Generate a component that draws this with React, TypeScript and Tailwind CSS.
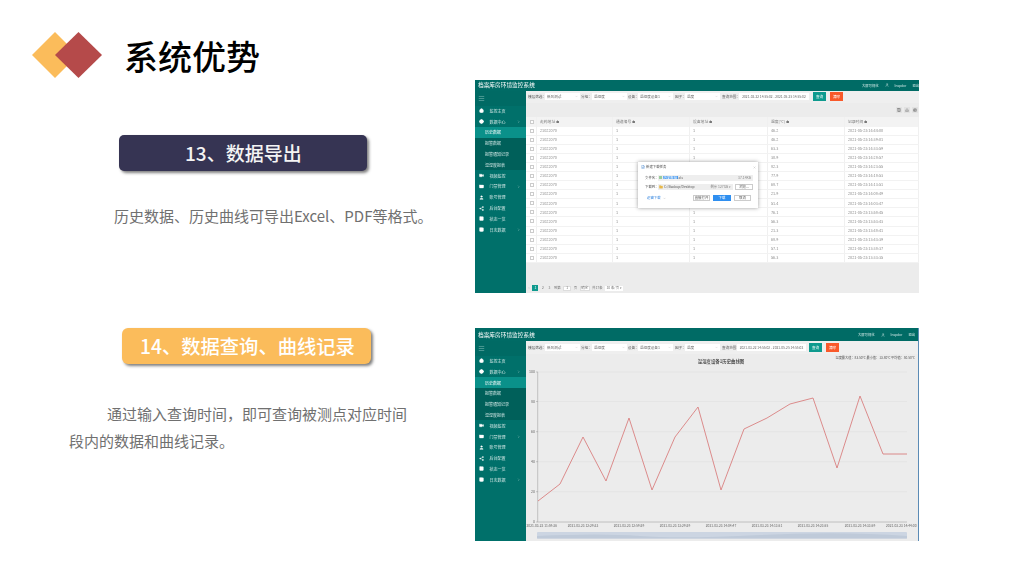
import React from "react";
import { Home, Globe, Video, Columns3, User, Share2, Table, CreditCard, ChevronRight, ChevronDown, Menu, Printer, Download, FileDown, X, Folder } from "lucide-react";

const menu: { label: string; Icon?: any; arrow?: boolean; sub?: boolean; active?: boolean }[] = [
  { label: "监控主页", Icon: Home },
  { label: "数据中心", Icon: Globe, arrow: true },
  { label: "历史数据", sub: true, active: true },
  { label: "报警数据", sub: true },
  { label: "报警通知记录", sub: true },
  { label: "温湿度报表", sub: true },
  { label: "视频监控", Icon: Video },
  { label: "门禁管理", Icon: CreditCard, arrow: true },
  { label: "账号管理", Icon: User },
  { label: "后台配置", Icon: Share2 },
  { label: "状态一览", Icon: Columns3 },
  { label: "日志数据", Icon: Table, arrow: true },
];

const rows: [string, string][] = [
  ["46.2", "2021-05-25 14:44:00"],
  ["46.2", "2021-05-25 14:39:01"],
  ["63.3", "2021-05-25 14:33:59"],
  ["30.9", "2021-05-25 14:28:57"],
  ["82.3", "2021-05-25 14:23:55"],
  ["77.9", "2021-05-25 14:18:53"],
  ["68.7", "2021-05-25 14:13:51"],
  ["21.9", "2021-05-25 14:08:49"],
  ["51.4", "2021-05-25 14:03:47"],
  ["76.1", "2021-05-25 13:58:45"],
  ["56.3", "2021-05-25 13:53:43"],
  ["21.3", "2021-05-25 13:48:41"],
  ["68.9", "2021-05-25 13:43:39"],
  ["57.1", "2021-05-25 13:38:37"],
  ["56.3", "2021-05-25 13:33:35"],
];

function Sidebar({ topRow }: { topRow: string }) {
  return (
    <div className="w-[51px] h-full shrink-0 bg-[#00706a] flex flex-col text-[#cfe6e4] text-[4px] leading-none">
      <div className={`${topRow} shrink-0 bg-[#006a64] flex items-center pl-[3px]`}>
        <Menu className="w-[7px] h-[7px] text-[#7cb8b3]" strokeWidth={2} />
      </div>
      {menu.map((m) => (
        <div
          key={m.label}
          className={`h-[10.8px] shrink-0 flex items-center ${m.active ? "bg-[#0a918a] text-white" : m.sub ? "bg-[#00605a]" : ""} ${m.sub ? "pl-[10px]" : "pl-[3.5px]"}`}
        >
          {m.Icon && <m.Icon className="w-[5px] h-[5px] text-white mr-[6px] shrink-0" fill="white" strokeWidth={1.5} />}
          <span className="whitespace-nowrap">{m.label}</span>
          {m.arrow && <ChevronRight className="w-[3.5px] h-[3.5px] ml-auto mr-[6px]" strokeWidth={2} />}
        </div>
      ))}
    </div>
  );
}

function Header({ h, px }: { h: string; px: string }) {
  return (
    <div className={`${h} shrink-0 bg-[#006b65] flex items-center justify-between ${px} text-white`}>
      <span className="text-[5.7px] leading-none whitespace-nowrap">档案库房环境监控系统</span>
      <div className="flex items-center gap-[6px] text-[3.3px] leading-none text-[#d5ecea]">
        <span>大屏可视化</span>
        <User className="w-[4px] h-[4px]" strokeWidth={2} />
        <span>Inspdor</span>
        <span>退出</span>
      </div>
    </div>
  );
}

function Select({ text }: { text: string }) {
  return (
    <div className="w-[35px] h-[7px] bg-white flex items-center justify-between px-[2px] text-[#666] shrink-0">
      <span className="whitespace-nowrap">{text}</span>
      <ChevronDown className="w-[3px] h-[3px] text-[#aaa]" strokeWidth={2} />
    </div>
  );
}

function Toolbar({ h, lastLabel, rangeW, firstBtn }: { h: string; lastLabel: string; rangeW: string; firstBtn: string }) {
  return (
    <div className={`${h} shrink-0 bg-[#efefef] flex items-center pl-[2px] text-[3.6px] leading-none text-[#555]`}>
      <span className="w-[17px] shrink-0 whitespace-nowrap">楼层筛选：</span>
      <Select text="新风测试" />
      <span className="w-[12px] pl-[1px] shrink-0 whitespace-nowrap">分组：</span>
      <Select text="温湿度" />
      <span className="w-[11px] pl-[1px] shrink-0 whitespace-nowrap">设备：</span>
      <Select text="温湿度设备1" />
      <span className="w-[12px] pl-[2px] shrink-0 whitespace-nowrap">因子：</span>
      <Select text="温度" />
      <span className={`${lastLabel} pl-[2px] shrink-0 whitespace-nowrap`}>查询范围：</span>
      <div className={`${rangeW} h-[7px] bg-white flex items-center justify-center text-[#666] shrink-0 whitespace-nowrap text-[3.3px]`}>
        2021-03-22 14:55:02 - 2021-05-25 14:55:02
      </div>
      <div className={`w-[13px] h-[9px] ${firstBtn} bg-[#0e9a8e] text-white flex items-center justify-center shrink-0`}>查询</div>
      <div className="w-[13px] h-[9px] ml-[4px] bg-[#f9592a] text-white flex items-center justify-center shrink-0">清除</div>
    </div>
  );
}

const gridCols = "grid grid-cols-[11px_76px_77px_78px_77px_74px]";

function Cell({ children }: { children?: React.ReactNode }) {
  return <div className="border-r border-[#f0f0f0] pl-[3px] flex items-center overflow-hidden whitespace-nowrap">{children}</div>;
}

function Box() {
  return <div className="w-[4px] h-[4px] border-[0.5px] border-[#ccc] bg-white mx-auto -translate-x-[1px]" />;
}

function DownloadDialog() {
  return (
    <div className="absolute left-[112px] top-[71px] w-[120px] h-[46px] bg-white shadow-[0_0_4px_rgba(0,0,0,0.4)] text-[3.4px] leading-none text-[#555] flex flex-col px-[7px] pt-[3px]">
      <div className="flex items-center h-[5px] -ml-[4px] -mr-[5px]">
        <FileDown className="w-[4px] h-[4px] text-[#3478c8] mr-[1px]" strokeWidth={2} />
        <span>新建下载任务</span>
        <X className="w-[3px] h-[3px] ml-auto text-[#999]" strokeWidth={2} />
      </div>
      <div className="flex items-center mt-[5px] h-[6px]">
        <span className="w-[13px] shrink-0 whitespace-nowrap">文件名：</span>
        <div className="w-[95px] h-[6px] bg-[#eeeeee] flex items-center pl-[1px] pr-[2px] shrink-0">
          <div className="w-[3px] h-[3.5px] bg-[#9ccc9c] mr-[1px]" />
          <span className="bg-[#4c9cf0] text-white px-[0.5px] whitespace-nowrap">历史数据</span>
          <span>.xls</span>
          <span className="ml-auto text-[#888]">37.14KB</span>
        </div>
      </div>
      <div className="flex items-center mt-[3px] h-[6px]">
        <span className="w-[13px] shrink-0 whitespace-nowrap">下载到：</span>
        <div className="w-[75px] h-[6px] bg-[#eeeeee] flex items-center pl-[1px] pr-[2px] shrink-0">
          <Folder className="w-[4px] h-[4px] text-[#e8b84a] mr-[1px]" fill="#e8b84a" />
          <span className="whitespace-nowrap">C:/Backup/Desktop</span>
          <span className="ml-auto text-[#888] whitespace-nowrap">剩余 127GB ▾</span>
        </div>
        <div className="w-[18px] h-[6px] ml-[2px] border-[0.5px] border-[#ccc] flex items-center justify-center shrink-0">浏览...</div>
      </div>
      <div className="flex items-center mt-[5px] h-[7px]">
        <span className="text-[#3c8ae0] ml-[2px] whitespace-nowrap">迅雷下载</span>
        <ChevronDown className="w-[3px] h-[3px] ml-[2px] text-[#999]" />
        <div className="w-[17px] h-[6px] ml-auto border-[0.5px] border-[#ccc] flex items-center justify-center">直接打开</div>
        <div className="w-[18px] h-[6px] ml-[3px] bg-[#2f8ff0] text-white flex items-center justify-center">下载</div>
        <div className="w-[17px] h-[6px] ml-[3px] border-[0.5px] border-[#ccc] flex items-center justify-center">取消</div>
      </div>
    </div>
  );
}

function TableApp() {
  return (
    <div className="w-[444px] h-[213px] flex flex-col overflow-hidden bg-white blur-[0.5px]">
      <Header h="h-[10.5px]" px="pl-[3px]" />
      <div className="flex-1 flex min-h-0">
        <Sidebar topRow="h-[15px]" />
        <div className="relative flex-1 min-w-0 flex flex-col bg-[#ececec]">
          <Toolbar h="h-[12px]" lastLabel="w-[19px]" rangeW="w-[70px]" firstBtn="ml-[4px]" />
          <div className="h-[14.5px] shrink-0 flex items-center justify-end gap-[2px] pr-[1px]">
            <Columns3 className="w-[6px] h-[6px] p-[1px] bg-[#e2e2e2] text-[#555]" />
            <Download className="w-[6px] h-[6px] p-[1px] bg-[#e2e2e2] text-[#555]" />
            <Printer className="w-[6px] h-[6px] p-[1px] bg-[#e2e2e2] text-[#555]" />
          </div>
          <div className={`${gridCols} h-[10px] shrink-0 bg-[#f3f3f3] text-[3.8px] leading-none text-[#777]`}>
            <Cell><Box /></Cell>
            <Cell>走药地址 ≑</Cell>
            <Cell>通道编号 ≑</Cell>
            <Cell>设备地址 ≑</Cell>
            <Cell>温度(℃) ≑</Cell>
            <Cell>记录时间 ≑</Cell>
          </div>
          {rows.map(([t, d]) => (
            <div key={d} className={`${gridCols} h-[9.05px] shrink-0 bg-white border-b border-[#f2f2f2] text-[3.8px] leading-none text-[#8a8a8a]`}>
              <Cell><Box /></Cell>
              <Cell>21022070</Cell>
              <Cell>1</Cell>
              <Cell>1</Cell>
              <Cell>{t}</Cell>
              <Cell>{d}</Cell>
            </div>
          ))}
          <div className="mt-auto mb-[2px] h-[6px] flex items-center gap-[2.5px] pl-[2px] text-[3.4px] leading-none text-[#777]">
            <span className="text-[#bbb]">&lt;</span>
            <span className="w-[6px] h-[6px] bg-[#0e9a8e] text-white flex items-center justify-center">1</span>
            <span className="w-[4px] text-center">2</span>
            <span className="w-[4px] text-center">3</span>
            <span>到第</span>
            <span className="w-[8px] h-[5px] bg-white border-[0.5px] border-[#ddd] flex items-center justify-center">1</span>
            <span>页</span>
            <span className="w-[10px] h-[5px] bg-white border-[0.5px] border-[#ddd] flex items-center justify-center">确定</span>
            <span>共17条</span>
            <span className="w-[18px] h-[5px] bg-white flex items-center justify-center">10 条/页 ▾</span>
          </div>
          <DownloadDialog />
        </div>
      </div>
    </div>
  );
}

const pts =
  "538,501 560,484 583,437 606,481 629,418 652,490 675,437 698,407 721,490 744,429 767,418 790,404 813,398 837,468 860,396 883,454 907,454";
const yTicks: [string, number][] = [["100", 372], ["80", 401.5], ["60", 431.7], ["40", 461.7], ["20", 491.7], ["0", 522]];
const xTicks: [number, string, "start" | "middle" | "end"][] = [
  [526.5, "2021-03-23 11:59:36", "start"],
  [583, "2021-03-23 12:29:33", "middle"],
  [629, "2021-03-23 12:59:29", "middle"],
  [675, "2021-03-23 13:29:29", "middle"],
  [721, "2021-03-23 14:04:47", "middle"],
  [767, "2021-03-23 14:13:51", "middle"],
  [813, "2021-03-23 14:23:55", "middle"],
  [860, "2021-03-23 14:33:59", "middle"],
  [916.5, "2021-03-23 14:44:00", "end"],
];

function ChartApp() {
  return (
    <div className="w-[444px] h-[213px] flex flex-col overflow-hidden bg-white blur-[0.5px] border-r border-[#5b8bb5]">
      <Header h="h-[13px]" px="pl-[3px] pr-[3px]" />
      <div className="flex-1 flex min-h-0">
        <Sidebar topRow="h-[14.6px]" />
        <div className="relative flex-1 min-w-0 flex flex-col bg-[#ececec]">
          <Toolbar h="h-[13px]" lastLabel="w-[17px]" rangeW="w-[69px]" firstBtn="ml-[3px]" />
          <svg viewBox="526 354 392 187" className="w-[392px] h-[187px] block">
            {yTicks.slice(0, 5).map(([, y]) => (
              <line key={y} x1="538" x2="907" y1={y} y2={y} stroke="#e0e0e0" strokeWidth="0.6" />
            ))}
            <line x1="537.7" x2="537.7" y1="372" y2="522" stroke="#b5b5b5" strokeWidth="0.8" />
            <line x1="537.7" x2="907" y1="522" y2="522" stroke="#b5b5b5" strokeWidth="0.8" />
            {yTicks.map(([l, y]) => (
              <g key={l}>
                <line x1="536" x2="538" y1={y} y2={y} stroke="#999" strokeWidth="0.5" />
                <text x="535" y={y + 1.3} fontSize="3.6" textAnchor="end" fill="#666">{l}</text>
              </g>
            ))}
            {xTicks.map(([x, l, a]) => (
              <text key={x} x={x} y="526.5" fontSize="3.3" textAnchor={a} fill="#666">{l}</text>
            ))}
            <polyline points={pts} fill="none" stroke="#d98080" strokeWidth="0.9" />
            <text x="721" y="362.5" fontSize="4.4" fontWeight="500" textAnchor="middle" fill="#333">温湿度设备1历史曲线图</text>
            <text x="915" y="358.5" fontSize="3.2" textAnchor="end" fill="#555">温度最大值：83.50℃ 最小值：13.80℃ 平均值：50.50℃</text>
            <rect x="537" y="532" width="370" height="6.5" rx="1" fill="#ccd5e2" />
            <path d="M537 536 Q600 533 640 536 T760 535 T907 536 V538.5 H537Z" fill="#bfcad9" />
            <circle cx="915" cy="345" r="3" fill="#4a86e8" />
            <circle cx="915" cy="345" r="1.2" fill="#dbe8fb" />
          </svg>
        </div>
      </div>
    </div>
  );
}

export default function App() {
  return (
    <div className="w-[1028px] h-[578px] overflow-hidden bg-white font-['Noto_Sans_CJK_SC','Noto_Sans',sans-serif]">
      <div className="h-[80px] flex items-start pt-[32px] pl-[32px]">
        <svg viewBox="0 0 70 46" className="w-[70px] h-[46px] shrink-0">
          <polygon points="23,0 46,23 23,46 0,23" fill="#fbbc5b" />
          <polygon points="46.5,0 70,23 46.5,46 23,23" fill="#b54a4a" />
        </svg>
        <h1 className="ml-[22px] mt-[2px] text-[34px] leading-[44px] font-medium text-black whitespace-nowrap">系统优势</h1>
      </div>

      <div className="flex h-[213px]">
        <div className="w-[475px] shrink-0 pt-[55px]">
          <div className="ml-[119px] w-[248px] h-[36px] rounded-[5px] bg-[#363453] shadow-[2px_2px_3px_rgba(0,0,0,0.5)] flex items-center pl-[66px] text-[19px] font-medium text-[#f4f4f4] whitespace-nowrap">
            13、数据导出
          </div>
          <p className="ml-[114px] mt-[33px] text-[15px] leading-[24px] text-[#707070] whitespace-nowrap">
            历史数据、历史曲线可导出Excel、PDF等格式。
          </p>
        </div>
        <TableApp />
      </div>

      <div className="flex h-[213px] mt-[35px]">
        <div className="w-[475px] shrink-0">
          <div className="ml-[122px] w-[249px] h-[36px] rounded-[6px] bg-[#fbbc5b] shadow-[2px_2px_3px_rgba(0,0,0,0.5)] flex items-center pl-[18px] text-[19.3px] font-medium text-white whitespace-nowrap">
            14、数据查询、曲线记录
          </div>
          <p className="ml-[69px] w-[340px] mt-[36px] text-[15px] leading-[27px] text-[#707070]">
            <span className="block pl-[38px] whitespace-nowrap">通过输入查询时间，即可查询被测点对应时间</span>
            <span className="block whitespace-nowrap">段内的数据和曲线记录。</span>
          </p>
        </div>
        <ChartApp />
      </div>
    </div>
  );
}
